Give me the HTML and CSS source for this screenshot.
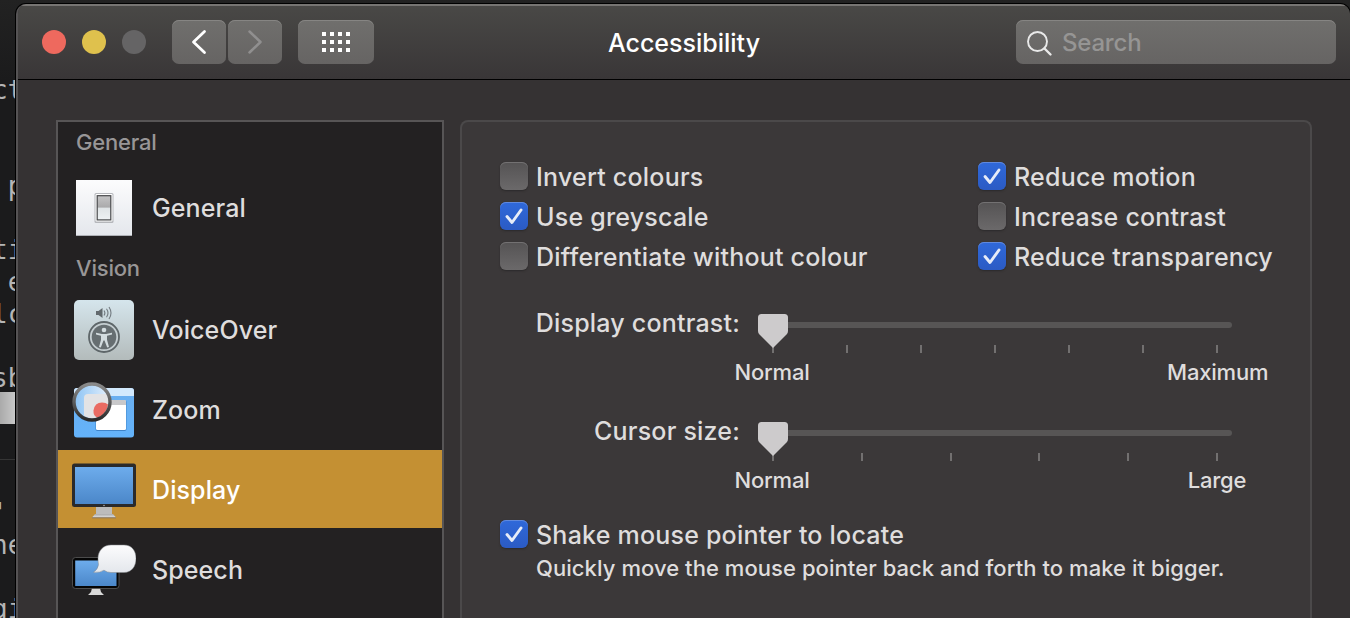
FILE: index.html
```html
<!DOCTYPE html>
<html lang="en">
<head>
<meta charset="utf-8">
<title>Accessibility</title>
<link rel="stylesheet" href="styles.css">
</head>
<body>
<svg class="defs" width="0" height="0">
  <defs>
    <linearGradient id="blue" x1="0" y1="0" x2="0" y2="1"><stop offset="0" stop-color="#6dacec"/><stop offset="1" stop-color="#4b87c9"/></linearGradient>
    <linearGradient id="plate" x1="0" y1="0" x2="0" y2="1"><stop offset="0" stop-color="#fcfcfd"/><stop offset="1" stop-color="#e4e7ec"/></linearGradient>
    <linearGradient id="voice" x1="0" y1="0" x2="0" y2="1"><stop offset="0" stop-color="#d5e5ec"/><stop offset="1" stop-color="#b3bbbb"/></linearGradient>
    <linearGradient id="rocker" x1="0" y1="0" x2="0" y2="1"><stop offset="0" stop-color="#c4c4c5"/><stop offset=".48" stop-color="#aaaaab"/><stop offset=".5" stop-color="#dfe4e6"/><stop offset="1" stop-color="#eef2f4"/></linearGradient>
    <linearGradient id="win" x1="0" y1="0" x2="0" y2="1"><stop offset="0" stop-color="#6aaeee"/><stop offset="1" stop-color="#64b3fb"/></linearGradient>
    <linearGradient id="lens" x1="0" y1="0" x2="1" y2="0"><stop offset="0" stop-color="#8ec4f5"/><stop offset="1" stop-color="#e3effb"/></linearGradient>
    <linearGradient id="ring" x1="0" y1="0" x2="0" y2="1"><stop offset="0" stop-color="#8a8a8a"/><stop offset="1" stop-color="#2b2b2b"/></linearGradient>
    <linearGradient id="metal" x1="0" y1="0" x2="0" y2="1"><stop offset="0" stop-color="#a9a9a9"/><stop offset="1" stop-color="#e2e2e2"/></linearGradient>
  </defs>
</svg>
<div class="desktop">
  <div class="terminal">
    <div class="line">ct</div><div class="line"></div><div class="line"></div>
    <div class="line">&nbsp;p</div><div class="line"></div>
    <div class="line">ti</div><div class="line">&nbsp;e</div><div class="line">lc</div><div class="line"></div>
    <div class="line">sb</div><div class="line block"></div><div class="line"></div>
    <div class="line rule"></div><div class="line">'</div>
    <div class="line">ne</div><div class="line"></div><div class="line">gi</div>
  </div>
  <main class="window">
    <header class="toolbar">
      <div class="lights"><i class="light red"></i><i class="light yellow"></i><i class="light off"></i></div>
      <div class="nav">
        <button class="btn back"><svg width="54" height="44"><path d="M32.5 11.5 21.5 22l11 10.500" fill="none" stroke="#fff" stroke-width="2.8" stroke-linecap="round" stroke-linejoin="round"/></svg></button>
        <button class="btn forward"><svg width="54" height="44"><path d="M21.500 11.500 32.500 22l-11 10.500" fill="none" stroke="#908f8f" stroke-width="2.500" stroke-linecap="round" stroke-linejoin="round"/></svg></button>
      </div>
      <button class="btn all"><svg width="76" height="44"><g stroke="#fff" stroke-width="4" stroke-dasharray="4 4"><path d="M24 14h28M24 22h28M24 30h28"/></g></svg></button>
      <h1 class="title">Accessibility</h1>
      <div class="search"><svg width="46" height="44"><circle cx="21.500" cy="21.500" r="9.500" fill="none" stroke="#e9e9e9" stroke-width="1.900"/><path d="m28.500 28.500 6 6" stroke="#e9e9e9" stroke-width="2.400" stroke-linecap="round"/></svg><span class="placeholder">Search</span></div>
    </header>
    <div class="content">
      <nav class="sidebar">
        <div class="head first">General</div>
        <div class="item">
          <svg width="64" height="78"><rect x="4" y="12" width="56" height="56" fill="url(#plate)"/><path d="M4 67.500h56" stroke="#aeb1b6"/><rect x="22.500" y="25" width="19" height="30" rx="1.500" fill="#b5b7bb"/><rect x="23.500" y="26" width="17" height="27.500" rx="1" fill="#fff"/><rect x="25.200" y="27.700" width="13.600" height="24.200" fill="url(#rocker)" stroke="#47484a" stroke-width="1.200"/></svg>
          <span class="name">General</span>
        </div>
        <div class="head">Vision</div>
        <div class="item">
          <svg width="64" height="78"><rect x="2" y="10" width="60" height="60" rx="5" fill="url(#voice)"/>
            <path d="M24 21h2.500l4-3v10l-4-3H24z" fill="#62696d"/><path d="M32 20.500q1.800 2.500 0 5M34.500 18.800q3 4.200 0 8.400M37 17q4 6 0 12" fill="none" stroke="#737b80" stroke-width="1.100"/>
            <circle cx="32" cy="47" r="15" fill="#c5ced1" stroke="#5e6669" stroke-width="1.800"/><circle cx="32" cy="47" r="12.300" fill="#666e71"/>
            <circle cx="32" cy="40" r="2.300" fill="#d3dcdf"/><path d="M24 42.800 30 44h4l6-1.200v1.600l-5 1.300v4l2 7.300-1.800.6-2.700-7h-1l-2.700 7-1.800-.6 2-7.300v-4l-5-1.300z" fill="#d3dcdf"/></svg>
          <span class="name">VoiceOver</span>
        </div>
        <div class="item">
          <svg width="64" height="78"><rect x="2" y="18" width="60" height="49.500" rx="3" fill="url(#win)"/><path d="M2 26v-5q0-3 3-3h54q3 0 3 3v5z" fill="#d2e9fd"/>
            <rect x="23.500" y="30" width="31" height="31" rx="2" fill="#3f83c8"/><rect x="24" y="30" width="30" height="30" rx="1.500" fill="#fff"/><path d="M24 35v-3.500q0-1.500 1.500-1.500h27q1.500 0 1.500 1.500V35z" fill="#c8c8ca"/>
            <circle cx="20" cy="32" r="17" fill="url(#lens)"/><path d="M12 46V28q0-4 4-4h19.500q4 12-3 19-9 9-20.500 3z" fill="#e3e3e5"/><path d="M36 34.500a17 17 0 0 1-10.500 13.300q-4.500-2-4-7.300 1-8 8.500-8 4 0 6 2z" fill="#ea6b62"/>
            <circle cx="20" cy="32" r="18" fill="none" stroke="url(#ring)" stroke-width="3.400"/></svg>
          <span class="name">Zoom</span>
        </div>
        <div class="item selected">
          <svg width="64" height="78"><rect x="24" y="56" width="16" height="10" fill="#bcbcbc"/><path d="M23 64h18l3 3.500H20z" fill="url(#metal)"/><path d="M20 67.800h24" stroke="#84776a"/><rect x="0" y="13.500" width="64" height="43.500" rx="2.500" fill="#2a2a2b"/><rect x="3" y="17" width="58" height="37" fill="url(#blue)"/><circle cx="32" cy="55.500" r=".8" fill="#aaa"/></svg>
          <span class="name">Display</span>
        </div>
        <div class="item">
          <svg width="64" height="78"><path d="M20 58h8l1 4 3 3H16l3-3z" fill="#d8d8d8"/><rect x=".5" y="27.500" width="46.500" height="31" rx="3" fill="#050505" stroke="#5c5c5c" stroke-width=".8"/><rect x="3.200" y="30.500" width="41.300" height="25.500" fill="url(#blue)"/>
            <path d="M39 15h13c8 0 12 6 12 13.500S60 42.500 52 42.500H39q-4 0-7-2.300-4 2.800-10.500 2 4.500-3 5-7.500Q26 32 26 28.500C26 21 31 15 39 15z" fill="url(#plate)" stroke="#84888d" stroke-width=".5"/></svg>
          <span class="name">Speech</span>
        </div>
      </nav>
      <section class="panel">
        <div class="checks">
          <label class="check"><i class="box"></i><span>Invert colours</span></label>
          <label class="check"><i class="box on"><svg width="28" height="28"><path d="m7 14.500 5 6 9-12.500"/></svg></i><span>Reduce motion</span></label>
          <label class="check"><i class="box on"><svg width="28" height="28"><path d="m7 14.500 5 6 9-12.500"/></svg></i><span>Use greyscale</span></label>
          <label class="check"><i class="box"></i><span>Increase contrast</span></label>
          <label class="check"><i class="box"></i><span>Differentiate without colour</span></label>
          <label class="check"><i class="box on"><svg width="28" height="28"><path d="m7 14.500 5 6 9-12.500"/></svg></i><span>Reduce transparency</span></label>
        </div>
        <div class="slider">
          <div class="caption">Display contrast:</div>
          <div class="control">
            <svg width="476" height="42"><rect x="2" y="8" width="472" height="6" rx="3" fill="#575555"/><path d="M15 31v8M89 31v8M163 31v8M237 31v8M311 31v8M385 31v8M459 31v8" stroke="#727070" stroke-width="2"/><path class="thumb" d="M3.500 0h23Q30 0 30 3.500V17q0 2-1.500 3.600L15 34 1.500 20.600Q0 19 0 17V3.500Q0 0 3.500 0z"/></svg>
            <div class="ends"><span>Normal</span><span>Maximum</span></div>
          </div>
        </div>
        <div class="slider">
          <div class="caption">Cursor size:</div>
          <div class="control">
            <svg width="476" height="42"><rect x="2" y="8" width="472" height="6" rx="3" fill="#575555"/><path d="M15 31v8M104 31v8M193 31v8M281 31v8M370 31v8M459 31v8" stroke="#727070" stroke-width="2"/><path class="thumb" d="M3.500 0h23Q30 0 30 3.500V17q0 2-1.500 3.600L15 34 1.500 20.600Q0 19 0 17V3.500Q0 0 3.500 0z"/></svg>
            <div class="ends"><span>Normal</span><span>Large</span></div>
          </div>
        </div>
        <label class="check"><i class="box on"><svg width="28" height="28"><path d="m7 14.500 5 6 9-12.500"/></svg></i><span>Shake mouse pointer to locate</span></label>
        <p class="hint">Quickly move the mouse pointer back and forth to make it bigger.</p>
      </section>
    </div>
  </main>
</div>
</body>
</html>
```
FILE: styles.css
```css
* { box-sizing: border-box; }
body {
  margin: 0;
  width: 1350px;
  height: 618px;
  overflow: hidden;
  background: #1c1c1d;
  color: #dfdddd;
  font-family: Inter, "Liberation Sans", sans-serif;
  font-size: 25px;
  font-weight: 450;
}
svg { display: block; flex: none; }
.defs { position: absolute; }
.desktop { display: flex; height: 618px; background: linear-gradient(#222 0, #1b1b1c 80px); }

.terminal {
  width: 15px;
  flex: none;
  padding-top: 72px;
  overflow: hidden;
  color: #b5b5b5;
  font: 26px/36px "DejaVu Sans Mono", monospace;
}
.line { height: 32px; text-indent: -8px; white-space: pre; }
.block { background: linear-gradient(90deg, #aaa, #c8c8c8); }
.rule { border-top: 1px solid #353535; margin-top: 3px; height: 36px; }

.window {
  flex: 1;
  min-width: 0;
  margin: 4px 0 0 1px;
  display: flex;
  flex-direction: column;
  border-left: 2px solid #555354;
  border-radius: 10px 10px 0 0;
  box-shadow: 0 0 0 1px #000;
  background: #353233;
  overflow: hidden;
}
.toolbar {
  height: 76px;
  flex: none;
  display: flex;
  align-items: flex-start;
  padding: 14px 14px 0 24px;
  border-top: 2px solid #777573;
  border-bottom: 1px solid #000;
  background: linear-gradient(#494846, #393637);
}
.lights { display: flex; gap: 16px; padding-top: 10px; width: 130px; flex: none; }
.light { width: 24px; height: 24px; border-radius: 50%; }
.red { background: #ee695e; }
.yellow { background: #dfc14d; }
.off { background: #656465; }
.nav { display: flex; gap: 2px; margin-right: 16px; }
.btn, .search {
  height: 44px;
  padding: 0;
  border: 0;
  border-radius: 7px;
  background: linear-gradient(#706f6d, #666463);
  box-shadow: inset 0 1px #868583;
}
.back, .forward { width: 54px; }
.all { width: 76px; }
.title {
  flex: 1;
  margin: 0;
  padding-right: 22px;
  text-align: center;
  font-size: 25px;
  font-weight: 450;
  line-height: 46px;
  color: #fff;
}
.search { width: 320px; display: flex; align-items: center; color: #969594; }
.placeholder { font-size: 24px; letter-spacing: -.2px; }

.content { flex: 1; display: flex; align-items: stretch; gap: 16px; padding: 40px 38px 0 38px; }
.sidebar { width: 388px; flex: none; border: 2px solid #575556; border-bottom: 0; background: #232122; }
.head { height: 42px; padding-left: 18px; line-height: 40px; font-size: 22px; font-weight: 500; letter-spacing: -.2px; color: #989697; }
.head.first { height: 46px; }
.item { height: 78px; margin-bottom: 2px; padding-left: 14px; display: flex; align-items: center; gap: 16px; }
.name { padding-top: 1px; letter-spacing: .1px; }
.selected { background: #c49033; color: #fff; }

.panel {
  flex: 1;
  min-width: 0;
  padding: 40px 38px 0;
  border: 2px solid #4b494a;
  border-bottom: 0;
  border-radius: 8px 8px 0 0;
  background: #3b3839;
  white-space: nowrap;
}
.checks { display: grid; grid-template-columns: 478px auto; row-gap: 12px; margin-bottom: 38px; }
.check { display: flex; gap: 8px; height: 28px; line-height: 30px; letter-spacing: .22px; }
.box {
  width: 28px;
  height: 28px;
  flex: none;
  border-radius: 6px;
  background: linear-gradient(#555354, #6b696a);
  box-shadow: inset 0 1px #737172, 0 1px 2px #2b292a;
}
.on { background: linear-gradient(#2f69da, #2b5bc4); box-shadow: inset 0 1px #6089dd, 0 1px 2px #2b292a; }
.on path { fill: none; stroke: #e6ecf8; stroke-width: 2.9px; stroke-linecap: round; stroke-linejoin: round; }
.slider { display: flex; height: 108px; }
.caption { width: 240px; margin-right: 18px; text-align: right; line-height: 30px; letter-spacing: .2px; }
.control { padding-top: 6px; }
.thumb { fill: #cdcbcc; }
.ends { width: 545px; margin-left: -36px; display: flex; justify-content: space-between; font-size: 22px; line-height: 32px; letter-spacing: -.2px; }
.ends span { width: 100px; text-align: center; }
.slider + .check { margin-top: -4px; }
.hint { margin: 5px 0 0 36px; font-size: 22px; line-height: 30px; letter-spacing: .06px; }
```
